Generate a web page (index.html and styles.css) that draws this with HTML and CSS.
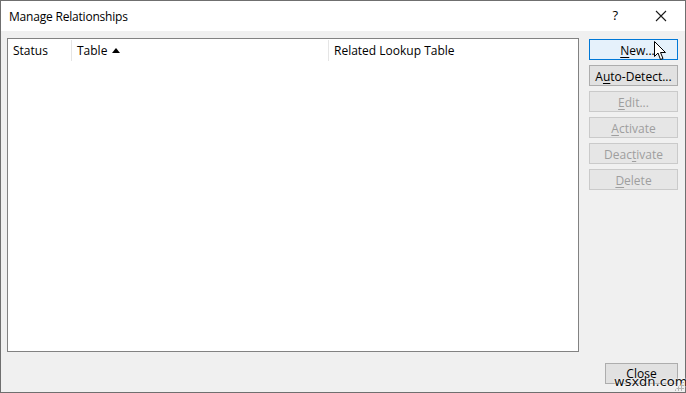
FILE: index.html
```html
<!DOCTYPE html>
<html lang="en">
<head>
  <meta charset="UTF-8">
  <title>Manage Relationships</title>
  <link rel="stylesheet" href="styles.css">
</head>
<body>

<div class="dialog">
  <div class="titlebar">
    <span class="title">Manage Relationships</span>
    <span class="help">?</span>
    <svg class="close-x" width="12" height="12" viewBox="0 0 12 12">
      <path d="M1 1 L11 11 M11 1 L1 11" stroke="#1a1a1a" stroke-width="1.1" fill="none"/>
    </svg>
  </div>

  <div class="body">
    <div class="main">
      <div class="list">
        <div class="list-head">
          <div class="col col-status">Status</div>
          <div class="col col-table">Table
            <svg class="sort" width="8" height="5" viewBox="0 0 8 5"><path d="M0 5 L4 0 L8 5 Z" fill="#000"/></svg>
          </div>
          <div class="col col-related">Related Lookup Table</div>
        </div>
      </div>

      <div class="actions">
        <button class="btn focused"><u>N</u>ew...</button>
        <button class="btn">A<u>u</u>to-Detect...</button>
        <button class="btn disabled"><u>E</u>dit...</button>
        <button class="btn disabled"><u>A</u>ctivate</button>
        <button class="btn disabled">Deac<u>t</u>ivate</button>
        <button class="btn disabled"><u>D</u>elete</button>
      </div>
    </div>

    <div class="footer">
      <button class="btn close">Close</button>
    </div>
  </div>

  <svg class="cursor" width="13" height="20" viewBox="0 0 13 20">
    <path d="M0.5 0.5 L0.5 15.5 L4 12 L6.5 18.5 L9 17.5 L6.5 11.5 L11.5 11.5 Z" fill="#fff" stroke="#000" stroke-width="1"/>
  </svg>
  <span class="watermark">wsxdn.com</span>
  <div class="grip"></div>
</div>

</body>
</html>
```

FILE: styles.css
```css
body {
  margin: 0;
  background: #fff;
  font-family: "Open Sans", "Noto Sans", sans-serif;
  font-size: 12px;
  color: #000;
}

.dialog {
  position: relative;
  width: 684px;
  height: 391px;
  border: 1px solid #6f6f6f;
  background: #f0f0f0;
  display: flex;
  flex-direction: column;
}

.titlebar {
  height: 30px;
  background: #fff;
  display: flex;
  align-items: center;
  padding-left: 8px;
}

.title {
  flex: 1;
  font-size: 12px;
  letter-spacing: -0.2px;
  color: #000;
}

.help {
  font-size: 13px;
  margin-right: 37px;
  margin-top: -2px;
}

.close-x {
  margin-right: 18px;
}

.body {
  flex: 1;
  display: flex;
  flex-direction: column;
  padding: 7px 7px 0 6px;
}

.main {
  display: flex;
  gap: 10px;
}

.list {
  width: 570px;
  height: 312px;
  border: 1px solid #828282;
  background: #fff;
}

.list-head {
  display: flex;
  height: 24px;
  padding-top: 1px;
}

.col {
  display: flex;
  align-items: center;
  padding-left: 5px;
  border-right: 1px solid #e5e5e5;
  height: 21px;
}

.col-status {
  width: 58px;
}

.col-table {
  width: 251px;
  gap: 5px;
}

.col-related {
  flex: 1;
  border-right: none;
}

.sort {
  margin-top: -1px;
}

.actions {
  width: 89px;
  display: flex;
  flex-direction: column;
  gap: 5px;
  padding-top: 1px;
}

.btn {
  height: 21px;
  font-family: inherit;
  font-size: 12px;
  color: #000;
  background: #e1e1e1;
  border: 1px solid #adadad;
  padding: 1px 0 0;
  line-height: 17px;
}

.btn u {
  text-underline-offset: 2px;
}

.btn.focused {
  background: #e5f1fb;
  border-color: #0078d7;
  padding-left: 8px;
}

.btn.disabled {
  background: #e6e6e6;
  border-color: #cacaca;
  color: #9e9e9e;
}

.footer {
  display: flex;
  justify-content: flex-end;
  margin-top: 11px;
}

.btn.close {
  width: 73px;
  padding-bottom: 4px;
}

.cursor {
  position: absolute;
  left: 653px;
  top: 40px;
}

.watermark {
  position: absolute;
  left: 613px;
  top: 373px;
  font-family: "DejaVu Sans", sans-serif;
  font-size: 13px;
  line-height: 15px;
  color: #111;
  text-shadow: 0 0 2px #fff, 0 0 2px #fff;
}

.grip {
  position: absolute;
  right: 1px;
  bottom: 1px;
  width: 10px;
  height: 10px;
  background: radial-gradient(circle, #b5b5b5 1px, transparent 1.2px) 0 0 / 3px 3px;
  clip-path: polygon(100% 0, 100% 100%, 0 100%);
}
```
